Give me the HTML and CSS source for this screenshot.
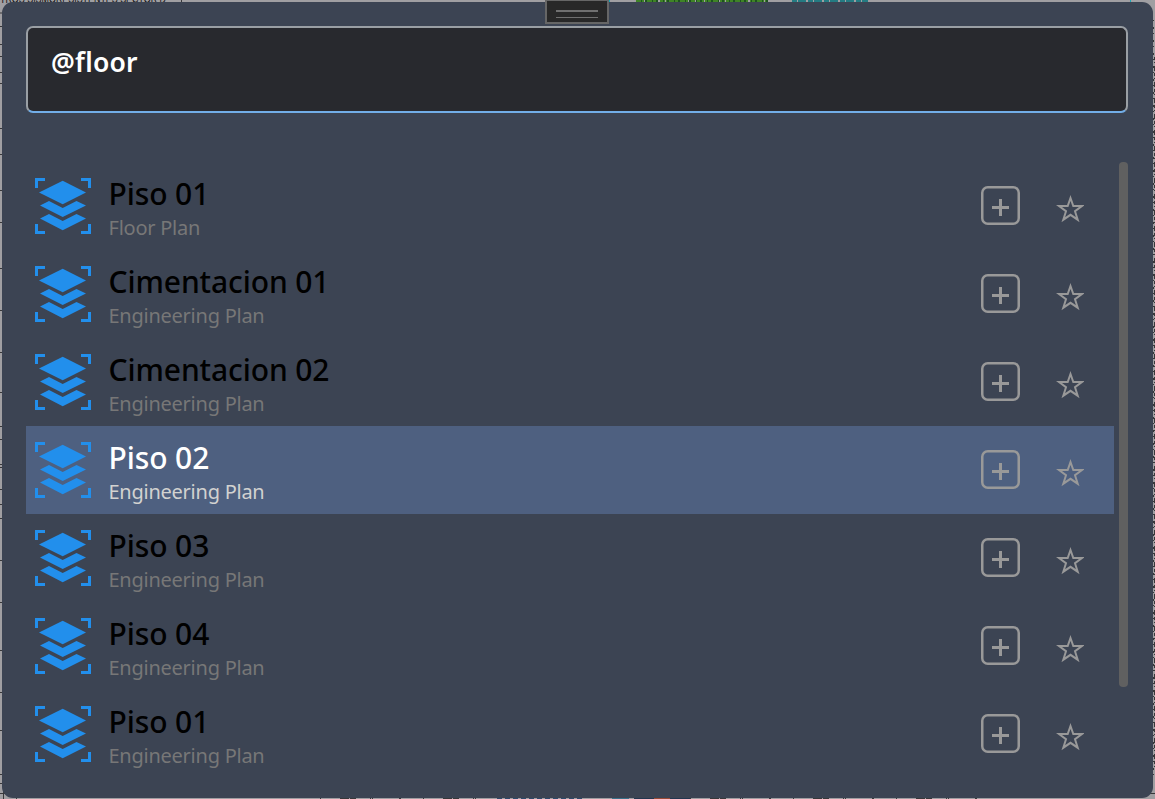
FILE: index.html
```
<!DOCTYPE html>
<html lang="es">
<head>
<meta charset="utf-8">
<title>Quick search</title>
<link rel="stylesheet" href="styles.css">
</head>
<body>
<svg class="drawing" viewBox="0 0 1155 799" aria-hidden="true">
  <g class="ink">
    <path d="M0 13h12M0 26.500h4M0 44.500h4M0 56.500h4M0 72.500h4M0 83.500h4M0 128.500h4M0 154.500h4M0 190.500h4M0 222.500h4M0 268.500h4M0 310.500h4M0 352.500h4M0 392.500h4M0 426.500h4M0 439.500h4M0 464.500h4M0 467.500h4M0 489.500h4M0 504.500h4M0 518.500h4M0 560.500h4M0 602.500h4M0 650.500h4M0 692.500h4M0 730.500h4M0 774.500h4M0 783.500h4M0 793.500h14M3.500 790v9M16.500 797v2M181.500 0v4M1150 793.500h5"/>
    <path stroke-dasharray="3 2 1 3 5 2" d="M1154.500 57V770"/>
    <path stroke-dasharray="1 6 2 4" d="M1153.500 20V775"/>
    <path stroke-dasharray="1 19 9 1 6 14 1 1 1 26 2 22" d="M320 798.500H480M690 798.500H995"/>
  </g>
  <path stroke="#3f8426" stroke-width="2" stroke-dasharray="8 1 13 2 5 1" d="M636 1H768"/>
  <path stroke="#1d5220" stroke-width="2" stroke-dasharray="1 3 2 5" d="M641 1H768"/>
  <path stroke="#247b82" stroke-width="2" stroke-dasharray="5 1 8 2" d="M792 1H868"/>
  <path stroke="#16a9b8" d="M609.500 0v2M1130.500 0v2"/>
  <path stroke="#2e496b" stroke-width="2" stroke-dasharray="5 3" d="M497 798.500H584"/>
  <path stroke="#39718a" stroke-width="2" d="M612 798.500h17"/>
  <path stroke="#24364f" stroke-width="2" d="M634 798.500h20M666 798.500h24"/>
  <path stroke="#9a4a35" stroke-width="2" d="M654 798.500h16"/>
  <text x="0" y="3" textLength="166" lengthAdjust="spacingAndGlyphs">TROS SISMORESISTENTES SECTOR D</text>
</svg>
<main class="panel">
  <div class="grip"></div>
  <div class="search">@floor</div>
  <div class="results">
    <ul class="list"></ul>
    <div class="scrollbar"></div>
  </div>
</main>

<template id="row">
  <li class="row">
    <svg class="layers" viewBox="0 0 56 56">
      <path d="M0 0h10v3H3v7H0zM46 0h10v10h-3V3h-7zM0 46h3v7h7v3H0zM53 46h3v10H46v-3h7z"/>
      <path d="M27.700 2.800L51 14.500 27.700 26.200 4 14.500z"/>
      <path d="M5 27.600L14 23l13.700 7L41.500 23l9.500 4.600L27.700 39z"/>
      <path d="M5 40.600L14 36l13.700 7L41.500 36l9.500 4.600L27.700 52.300z"/>
    </svg>
    <div class="label"><span class="name"></span><span class="kind"></span></div>
    <svg class="add" viewBox="0 0 39 39">
      <rect x="1.250" y="1.250" width="36.500" height="36.500" rx="5.500"/>
      <path class="plus" d="M11 21.500h17M19.500 13v17"/>
    </svg>
    <svg class="star" viewBox="0 0 28 28">
      <path d="M14.500 3L17.300 11H26L19 16.200 21.700 24.700 14.500 19.800 7.300 24.700 10 16.200 3 11H11.700z"/>
    </svg>
  </li>
</template>
<script src="app.js"></script>
</body>
</html>
```
FILE: styles.css
```
* { box-sizing: border-box; }

body {
  margin: 0;
  height: 799px;
  overflow: hidden;
  background: #a09fa2;
  font-family: "Noto Sans", "Open Sans", sans-serif;
}

.drawing {
  position: absolute;
  inset: 0;
  width: 1155px;
  height: 799px;
  fill: none;
}
.drawing text {
  fill: #111;
  font: 15px "Liberation Sans", sans-serif;
}
.ink { stroke: #38383a; }

.panel {
  position: relative;
  width: 1151px;
  height: 796px;
  margin: 2px;
  padding: 24px 25px 20px 24px;
  border-radius: 11px;
  background: #3c4453;
}

.grip {
  position: absolute;
  top: -3px;
  left: 543px;
  width: 64px;
  height: 25px;
  border: 2px solid #666;
  background: #282828;
}
.grip::after {
  content: "";
  display: block;
  width: 42px;
  height: 5px;
  margin: 9px auto 0;
  border-top: 2px solid #707070;
  border-bottom: 1px solid #707070;
}

.search {
  height: 87px;
  padding: 15px 23px;
  border: 2px solid #9a9fa4;
  border-bottom-color: #72aee8;
  border-radius: 7px;
  background: #28292e;
  color: #fff;
  font-size: 26.5px;
  font-weight: 600;
  letter-spacing: 0.25px;
  line-height: 38px;
}

.results {
  display: flex;
  justify-content: space-between;
  margin-top: 49px;
}

.list {
  width: 1088px;
  margin: 0;
  padding: 0;
  list-style: none;
}

.row {
  display: flex;
  align-items: center;
  height: 88px;
  padding: 0 30px 0 9px;
  color: #000;
}
.row.selected {
  background: #4e6080;
  color: #fff;
}

.layers {
  width: 56px;
  height: 56px;
  fill: #228fec;
}

.label {
  display: flex;
  flex: 1;
  flex-direction: column;
  padding: 3px 0 0 17.5px;
  white-space: nowrap;
}
.name {
  font-size: 30px;
  font-weight: 500;
  letter-spacing: -0.1px;
  line-height: 40px;
}
.kind {
  color: #777;
  font-size: 20px;
  letter-spacing: -0.25px;
  line-height: 28px;
}
.selected .kind { color: #d2d2d0; }

.add, .star {
  fill: none;
  stroke: #999;
}
.add {
  width: 39px;
  height: 39px;
  margin-bottom: 1px;
  stroke-width: 2.5;
}
.plus { stroke-width: 3; }
.star {
  width: 28px;
  height: 28px;
  margin: 6px 0 0 36px;
  stroke-width: 2;
}

.scrollbar {
  width: 9px;
  height: 525px;
  border-radius: 4px;
  background: #606060;
}
```
FILE: app.js
```
const views = [
  ["Piso 01", "Floor Plan"],
  ["Cimentacion 01", "Engineering Plan"],
  ["Cimentacion 02", "Engineering Plan"],
  ["Piso 02", "Engineering Plan"],
  ["Piso 03", "Engineering Plan"],
  ["Piso 04", "Engineering Plan"],
  ["Piso 01", "Engineering Plan"]
];
const list = document.querySelector(".list");
const template = document.getElementById("row");
views.forEach(([name, kind], index) => {
  const row = template.content.cloneNode(true);
  row.querySelector(".name").textContent = name;
  row.querySelector(".kind").textContent = kind;
  if (index === 3) row.querySelector(".row").classList.add("selected");
  list.append(row);
});
```
